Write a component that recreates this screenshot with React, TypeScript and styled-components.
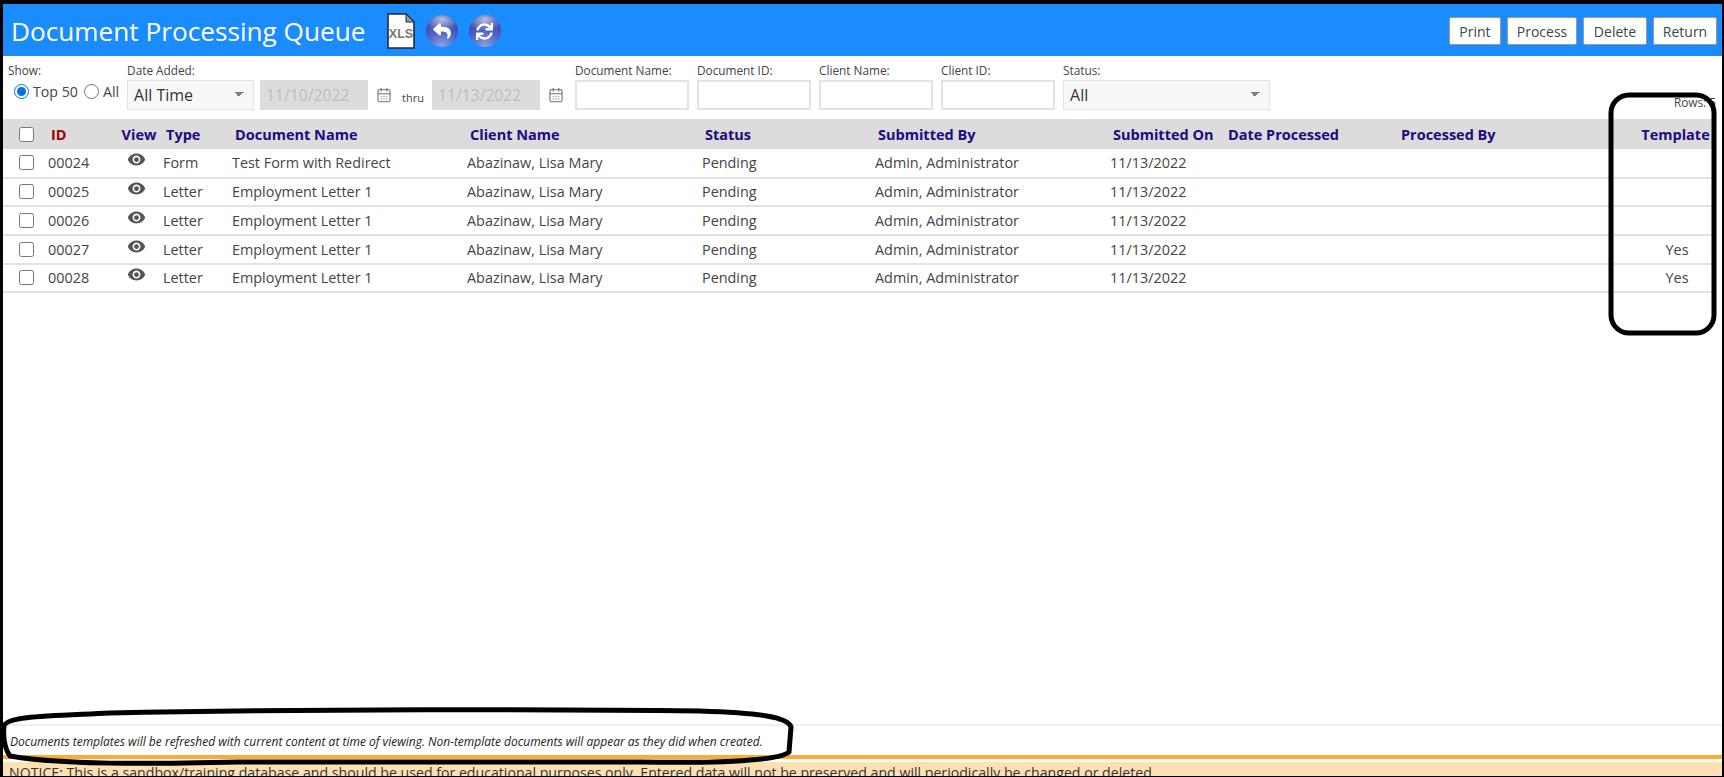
import { createGlobalStyle, styled } from "styled-components";
import { FaReply, FaSync } from "react-icons/fa";
import { MdVisibility } from "react-icons/md";
import { CalendarDays } from "lucide-react";

const GlobalStyle = createGlobalStyle`
    html, body {
        margin: 0;
        padding: 0;
        height: 100%;
        background: #fff;
        overflow: hidden;
    }
    * {
        box-sizing: border-box;
    }
`;

const Frame = styled.div`
    position: relative;
    height: 100vh;
    display: flex;
    flex-direction: column;
    overflow: hidden;
    border-top: 4px solid #000;
    border-left: 3px solid #000;
    border-right: 2px solid #000;
    border-bottom: 1px solid #000;
    font-family: "Open Sans", "Liberation Sans", sans-serif;
    color: #444;
`;

const Header = styled.header`
    height: 52px;
    flex: none;
    display: flex;
    align-items: center;
    padding: 2px 5px 0 8px;
    background: #1a8cff;
`;
const Title = styled.h1`
    margin: 0 21px 0 0;
    font-size: 26.2px;
    font-weight: 400;
    color: #fff;
    white-space: nowrap;
`;
const IconRow = styled.div`
    display: flex;
    align-items: center;
    gap: 11px;
`;
const Sphere = styled.span`
    width: 32px;
    height: 32px;
    border-radius: 50%;
    display: flex;
    align-items: center;
    justify-content: center;
    color: #fff;
    font-size: ${(p) => p.$size}px;
    background:
        radial-gradient(ellipse 60% 35% at 50% 14%, rgba(255, 255, 255, 0.65) 0%, rgba(255, 255, 255, 0) 100%),
        radial-gradient(circle at 50% 100%, #8fa3ea 0%, #4f64c6 45%, #3145a8 80%, #2b3c98 100%);
`;
const Actions = styled.div`
    margin-left: auto;
    display: flex;
    gap: 6px;
`;
const ActionButton = styled.button`
    height: 28px;
    width: ${(p) => p.$width}px;
    padding: 0;
    border: 1px solid #9a9a9a;
    border-radius: 2px;
    background: #fff;
    color: #444;
    font-family: inherit;
    font-size: 14px;
`;

const Filters = styled.div`
    height: 63px;
    flex: none;
    display: flex;
    align-items: flex-end;
    padding: 0 6px 9px 5px;
`;
const Field = styled.div`
    display: flex;
    flex-direction: column;
    margin-right: ${(p) => p.$gap ?? 8}px;
`;
const FieldLabel = styled.label`
    font-size: 11.8px;
    line-height: 15px;
    height: 17px;
    color: #444;
    white-space: nowrap;
`;
const RadioRow = styled.div`
    display: flex;
    align-items: center;
    height: 30px;
    padding: 0 0 8px 6px;
    font-size: 14.2px;
    white-space: nowrap;
`;
const Radio = styled.input`
    margin: 0 4px 0 0;
    width: 15px;
    height: 15px;
    accent-color: #0a6fe0;
`;
const RadioText = styled.span`
    margin-right: 6px;
`;
const SelectBox = styled.select`
    appearance: none;
    width: ${(p) => p.$width}px;
    height: 30px;
    padding: 0 0 0 6px;
    border: 1px solid #e2e2e2;
    color: #333;
    font-family: inherit;
    font-size: 16px;
    background-color: #f8f8f8;
    background-image: linear-gradient(45deg, transparent 50%, #808080 50%), linear-gradient(-45deg, transparent 50%, #808080 50%);
    background-size: 5px 5px, 5px 5px;
    background-position: right 14px top 11px, right 9px top 11px;
    background-repeat: no-repeat;
`;
const TextBox = styled.input`
    width: ${(p) => p.$width}px;
    height: 30px;
    border: 2px solid #e2e2e2;
    background: #fff;
`;
const DateBox = styled.input`
    width: 108px;
    height: 30px;
    padding: 0 0 0 6px;
    border: none;
    background: #dcdcdc;
    font-family: inherit;
    font-size: 15.7px;
    &:disabled {
        color: #bdbdbd;
    }
`;
const DateRow = styled.div`
    display: flex;
    align-items: center;
    margin-right: 11px;
`;
const Calendar = styled(CalendarDays)`
    width: 16px;
    height: 16px;
    margin-left: 8px;
    color: #8a8a8a;
`;
const Thru = styled.span`
    margin: 5px 8px 0 10px;
    font-size: 11px;
`;
const RowCount = styled.div`
    margin-left: auto;
    font-size: 11.8px;
    color: #444;
`;

const TableArea = styled.div`
    flex: 1;
    min-height: 0;
`;
const Table = styled.table`
    width: 1713px;
    table-layout: fixed;
    border-collapse: collapse;
    font-size: 14.4px;
`;
const Col = styled.col`
    width: ${(p) => p.$width}px;
`;
const HeadRow = styled.tr`
    height: 30px;
    background: #dcdcdc;
`;
const Th = styled.th`
    padding: 0 0 0 7px;
    text-align: left;
    font-size: 14.5px;
    font-weight: 700;
    color: ${(p) => (p.$sorted ? "#a00000" : "#200a80")};
    white-space: nowrap;
`;
const ViewHead = styled(Th)`
    padding: 0 0 0 5px;
    text-align: center;
`;
const TemplateHead = styled(Th)`
    padding: 0 5px 0 0;
    text-align: center;
`;
const Row = styled.tr`
    height: 28.67px;
    border-bottom: 2px solid #e2e2e2;
`;
const Td = styled.td`
    padding: 0 0 0 4px;
    white-space: nowrap;
    color: #444;
`;
const EyeCell = styled.td`
    padding: 0 1px 0 0;
`;
const TemplateCell = styled.td`
    padding: 0 2px 0 0;
    text-align: center;
    color: #444;
`;
const CheckCell = styled.td`
    padding: 0 0 0 16px;
`;
const CheckHead = styled.th`
    padding: 0 0 0 16px;
    text-align: left;
`;
const Check = styled.input`
    display: block;
    width: 15px;
    height: 15px;
    margin: 0;
`;
const Eye = styled(MdVisibility)`
    display: block;
    margin: -6px auto 0;
    font-size: 19px;
    color: #555;
`;

const Footnote = styled.div`
    flex: none;
    height: 31px;
    display: flex;
    align-items: center;
    padding: 2px 0 0 7px;
    border-top: 2px solid #eee;
    font-size: 12px;
    font-style: italic;
    color: #222;
`;
const Notice = styled.div`
    flex: none;
    height: 21px;
    border-top: 4px solid #ffab33;
    background: #ffe0b3;
    box-shadow: inset 0 3px 0 #fff;
    padding: 4px 0 0 6px;
    font-size: 14.15px;
    line-height: 19px;
    color: #333;
    white-space: nowrap;
`;

const Markup = styled.svg`
    position: absolute;
    left: -3px;
    top: -4px;
    width: 1724px;
    height: 777px;
    pointer-events: none;
`;

const widths = [41, 70, 45, 69, 235, 235, 173, 235, 115, 173, 246, 76];
const heads = ["Type", "Document Name", "Client Name", "Status", "Submitted By", "Submitted On", "Date Processed", "Processed By"];
const rows = [
    { id: "00024", type: "Form", name: "Test Form with Redirect", template: "" },
    { id: "00025", type: "Letter", name: "Employment Letter 1", template: "" },
    { id: "00026", type: "Letter", name: "Employment Letter 1", template: "" },
    { id: "00027", type: "Letter", name: "Employment Letter 1", template: "Yes" },
    { id: "00028", type: "Letter", name: "Employment Letter 1", template: "Yes" },
];

export default function App() {
    return (
        <Frame>
            <GlobalStyle />
            <Header>
                <Title>Document Processing Queue</Title>
                <IconRow>
                    <svg width="28" height="36" viewBox="0 0 28 36">
                        <path d="M1 1h18l8 8v26H1z" fill="#fff" stroke="#1c2b3a" strokeWidth="1.6" />
                        <path d="M19 1v8h8z" fill="#9a9a9a" stroke="#1c2b3a" strokeWidth="1" />
                        <text x="14" y="25" textAnchor="middle" fontFamily="Liberation Sans" fontWeight="700" fontSize="12.5" fill="#777">XLS</text>
                    </svg>
                    <Sphere $size={18}><FaReply /></Sphere>
                    <Sphere $size={17}><FaSync /></Sphere>
                </IconRow>
                <Actions>
                    <ActionButton $width={52}>Print</ActionButton>
                    <ActionButton $width={70}>Process</ActionButton>
                    <ActionButton $width={64}>Delete</ActionButton>
                    <ActionButton $width={64}>Return</ActionButton>
                </Actions>
            </Header>

            <Filters>
                <Field $gap={2}>
                    <FieldLabel>Show:</FieldLabel>
                    <RadioRow>
                        <Radio type="radio" name="show" defaultChecked />
                        <RadioText>Top 50</RadioText>
                        <Radio type="radio" name="show" />
                        <RadioText>All</RadioText>
                    </RadioRow>
                </Field>
                <Field $gap={6}>
                    <FieldLabel>Date Added:</FieldLabel>
                    <SelectBox $width={127} defaultValue="All Time">
                        <option>All Time</option>
                    </SelectBox>
                </Field>
                <DateRow>
                    <DateBox disabled defaultValue="11/10/2022" />
                    <Calendar />
                    <Thru>thru</Thru>
                    <DateBox disabled defaultValue="11/13/2022" />
                    <Calendar />
                </DateRow>
                <Field>
                    <FieldLabel>Document Name:</FieldLabel>
                    <TextBox $width={114} />
                </Field>
                <Field>
                    <FieldLabel>Document ID:</FieldLabel>
                    <TextBox $width={114} />
                </Field>
                <Field>
                    <FieldLabel>Client Name:</FieldLabel>
                    <TextBox $width={114} />
                </Field>
                <Field>
                    <FieldLabel>Client ID:</FieldLabel>
                    <TextBox $width={114} />
                </Field>
                <Field>
                    <FieldLabel>Status:</FieldLabel>
                    <SelectBox $width={207} defaultValue="All">
                        <option>All</option>
                    </SelectBox>
                </Field>
                <RowCount>Rows: 5</RowCount>
            </Filters>

            <TableArea>
                <Table>
                    <colgroup>
                        {widths.map((w, i) => <Col key={i} $width={w} />)}
                    </colgroup>
                    <thead>
                        <HeadRow>
                            <CheckHead><Check type="checkbox" /></CheckHead>
                            <Th $sorted>ID</Th>
                            <ViewHead>View</ViewHead>
                            {heads.map((h) => <Th key={h}>{h}</Th>)}
                            <TemplateHead>Template</TemplateHead>
                        </HeadRow>
                    </thead>
                    <tbody>
                        {rows.map((r) => (
                            <Row key={r.id}>
                                <CheckCell><Check type="checkbox" /></CheckCell>
                                <Td>{r.id}</Td>
                                <EyeCell><Eye /></EyeCell>
                                <Td>{r.type}</Td>
                                <Td>{r.name}</Td>
                                <Td>Abazinaw, Lisa Mary</Td>
                                <Td>Pending</Td>
                                <Td>Admin, Administrator</Td>
                                <Td>11/13/2022</Td>
                                <Td />
                                <Td />
                                <TemplateCell>{r.template}</TemplateCell>
                            </Row>
                        ))}
                    </tbody>
                </Table>
            </TableArea>

            <Footnote>Documents templates will be refreshed with current content at time of viewing. Non-template documents will appear as they did when created.</Footnote>
            <Notice>NOTICE: This is a sandbox/training database and should be used for educational purposes only. Entered data will not be preserved and will periodically be changed or deleted.</Notice>

            {/* reviewer's hand drawn marks on top of the page */}
            <Markup viewBox="0 0 1724 777">
                <rect x="1611" y="95" width="103" height="238" rx="18" fill="none" stroke="#000" strokeWidth="5" />
                <path d="M4 726C6 716 50 716 110 713C300 709 560 709 700 711C760 713 788 717 791 727L789 752C778 762 700 763 640 762L240 762C150 764 60 765 10 756C4 748 3 735 4 726Z" fill="none" stroke="#000" strokeWidth="5" />
            </Markup>
        </Frame>
    );
}
